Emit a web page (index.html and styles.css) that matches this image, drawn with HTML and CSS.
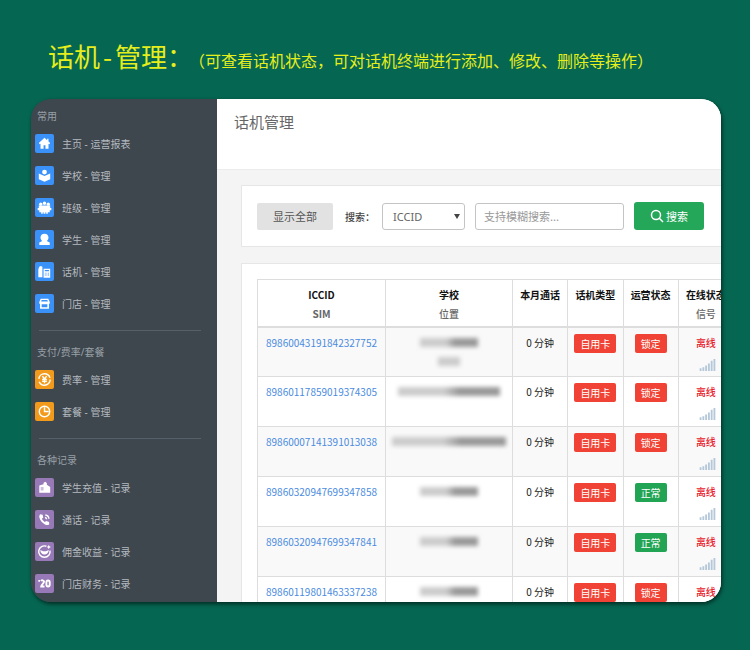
FILE: index.html
```
<!DOCTYPE html>
<html lang="zh-CN">
<head>
  <meta charset="UTF-8">
  <meta name="viewport" content="width=device-width, initial-scale=1.0">
  <title>话机管理</title>
  <link rel="stylesheet" href="styles.css">
</head>
<body>
  <svg class="defs" width="0" height="0" aria-hidden="true">
    <symbol id="signal" viewBox="0 0 17 13">
      <path d="M0 10h2v3H0zM3 9h2v4H3zM6 7h2v6H6zM9 5h2v8H9zM12 2h2v11h-2zM15 0h2v13h-2z"/>
    </symbol>
  </svg>

  <header class="banner">
    <h1>话机<span>-</span>管理：</h1>
    <p>（可查看话机状态，可对话机终端进行添加、修改、删除等操作）</p>
  </header>

  <div class="window">
    <nav class="sidebar">
      <h3>常用</h3>
      <ul class="blue">
        <li><a href="#"><svg viewBox="0 0 20 20"><path d="M10 4 4 9.600l1 1.200.8-.6v5.300H9v-3.600h2v3.600h3.200v-5.300l.8.600 1-1.200-1.800-1.700V5h-1.400v1.600z"/></svg>主页 - 运营报表</a></li>
        <li><a href="#"><svg viewBox="0 0 20 20"><circle cx="10" cy="6.400" r="2.500"/><path d="M4 7.800 10 10.600l6-2.800v6.200L10 16.600 4 14z"/></svg>学校 - 管理</a></li>
        <li><a href="#"><svg viewBox="0 0 20 20"><circle cx="6" cy="6.500" r="1.700"/><circle cx="10" cy="5.500" r="1.800"/><circle cx="14" cy="6.500" r="1.700"/><path d="M4 8h12v2.500h1.200V13h-1.700v2h-2v1.500h-1.700V15h-.8v1.500H9V15h-.8v1.500H6.500V15h-2v-2H2.800v-2.500H4z"/></svg>班级 - 管理</a></li>
        <li><a href="#"><svg viewBox="0 0 20 20"><path d="M10 4c2.600 0 4.200 1.700 4.200 4 0 1.500-.7 2.800-1.800 3.600l3.100 1.600v2.500h-11v-2.500l3.100-1.600C6.500 10.800 5.800 9.500 5.800 8c0-2.300 1.600-4 4.200-4z"/></svg>学生 - 管理</a></li>
        <li><a href="#"><svg viewBox="0 0 20 20"><path fill-rule="evenodd" d="M4.500 5 6 4.200 7.800 5v11H3.500V7.500zM9 7h7v9.500H9zm1.300 1.300v1.500h4.400V8.300zm0 2.900v.9h1v-.9zm1.700 0v.9h1v-.9zm1.700 0v.9h1v-.9zm-3.400 2v.9h1v-.9zm1.700 0v.9h1v-.9zm1.700 0v.9h1v-.9z"/></svg>话机 - 管理</a></li>
        <li><a href="#"><svg viewBox="0 0 20 20"><path fill-rule="evenodd" d="M6 5h8l1.500 3.500v1.800h-.8v5.200H5.300v-5.200h-.8V8.500zm1 1.200L6.400 8h7.200L13 6.200zm0 4.600V14h6v-3.200z"/></svg>门店 - 管理</a></li>
      </ul>
      <hr>
      <h3>支付/费率/套餐</h3>
      <ul class="orange">
        <li><a href="#"><svg viewBox="0 0 20 20"><circle class="ring" cx="10" cy="10" r="6" stroke-dasharray="16 3"/><path class="ring" d="m7.800 6.500 2.200 3 2.200-3M7.500 10h5M7.500 12h5M10 9.500V14"/></svg>费率 - 管理</a></li>
        <li><a href="#"><svg viewBox="0 0 20 20"><circle class="ring" cx="10" cy="10" r="5.500"/><path class="ring" d="M10 5.500V10h4.500"/></svg>套餐 - 管理</a></li>
      </ul>
      <hr>
      <h3>各种记录</h3>
      <ul class="purple">
        <li><a href="#"><svg viewBox="0 0 20 20"><path fill-rule="evenodd" d="M4.500 8 9 6.500V5l2-1 1.500 1.500V7L16 9.500v6H4.500zm1.500 2v1h3v-1zm0 2v1h3v-1z"/></svg>学生充值 - 记录</a></li>
        <li><a href="#"><svg viewBox="0 0 20 20"><path d="M5.500 4.500 8 5l.7 3-1.400 1.300c.6 1.500 1.600 2.600 3 3.400l1.500-1.200 3 1 .2 2.400c-1.200 1.200-2.700 1.200-4.500.3-3-1.500-5.200-4.200-5.900-7.200-.3-1.400 0-2.700.9-3.500z"/><path class="ring" d="M10.500 7.800c1 .2 1.600.9 1.700 2M10.800 5.300c2.300.2 3.700 1.700 3.800 4"/></svg>通话 - 记录</a></li>
        <li><a href="#"><svg viewBox="0 0 20 20"><path class="ring" d="M12 4.500A6 6 0 1 0 15.800 9"/><path d="m5.500 8.500 3 1.300h3l3-1.300c-.3 3-2 4.700-4.500 4.700s-4.200-1.700-4.500-4.700zM14.500 3l.7 1.600 1.600.7-1.600.7-.7 1.600-.7-1.600-1.600-.7 1.600-.7z"/></svg>佣金收益 - 记录</a></li>
        <li><a href="#"><svg viewBox="0 0 20 20"><path class="bold" d="M3.500 7.200h1.800M6.500 7.500c.5-1.200 3-1.200 3 .6 0 1.700-3 2.900-3 5h3.500"/><rect class="bold" x="12" y="6.800" width="3.500" height="6.300" rx="1.700"/></svg>门店财务 - 记录</a></li>
      </ul>
    </nav>

    <main>
      <div class="page-title"><h2>话机管理</h2></div>
      <div class="content">
        <form class="panel filter">
          <button type="button" class="btn-all">显示全部</button>
          <label for="field">搜索：</label>
          <div class="select">
            <select id="field"><option>ICCID</option></select>
          </div>
          <input type="text" aria-label="搜索内容" placeholder="支持模糊搜索...">
          <button type="submit" class="btn-search"><svg viewBox="0 0 14 14"><circle cx="6" cy="6" r="4.500"/><path d="m9.300 9.300 3.700 3.700"/></svg>搜索</button>
        </form>

        <div class="panel list">
          <table>
            <colgroup>
              <col class="col-id"><col class="col-school"><col><col><col><col>
            </colgroup>
            <thead>
              <tr>
                <th>ICCID<span class="sim">SIM</span></th>
                <th>学校<span>位置</span></th>
                <th>本月通话</th>
                <th>话机类型</th>
                <th>运营状态</th>
                <th>在线状态<span>信号</span></th>
              </tr>
            </thead>
            <tbody>
              <tr>
                <td><a href="#">89860043191842327752</a></td>
                <td><i class="mask"></i><i class="mask short"></i></td>
                <td>0 分钟</td>
                <td><span class="tag red">自用卡</span></td>
                <td><span class="tag red">锁定</span></td>
                <td class="offline">离线<svg class="signal"><use href="#signal"/></svg></td>
              </tr>
              <tr>
                <td><a href="#">89860117859019374305</a></td>
                <td><i class="mask long"></i></td>
                <td>0 分钟</td>
                <td><span class="tag red">自用卡</span></td>
                <td><span class="tag red">锁定</span></td>
                <td class="offline">离线<svg class="signal"><use href="#signal"/></svg></td>
              </tr>
              <tr>
                <td><a href="#">89860007141391013038</a></td>
                <td><i class="mask full"></i></td>
                <td>0 分钟</td>
                <td><span class="tag red">自用卡</span></td>
                <td><span class="tag red">锁定</span></td>
                <td class="offline">离线<svg class="signal"><use href="#signal"/></svg></td>
              </tr>
              <tr>
                <td><a href="#">89860320947699347858</a></td>
                <td><i class="mask"></i></td>
                <td>0 分钟</td>
                <td><span class="tag red">自用卡</span></td>
                <td><span class="tag green">正常</span></td>
                <td class="offline">离线<svg class="signal"><use href="#signal"/></svg></td>
              </tr>
              <tr>
                <td><a href="#">89860320947699347841</a></td>
                <td><i class="mask"></i></td>
                <td>0 分钟</td>
                <td><span class="tag red">自用卡</span></td>
                <td><span class="tag green">正常</span></td>
                <td class="offline">离线<svg class="signal"><use href="#signal"/></svg></td>
              </tr>
              <tr>
                <td><a href="#">89860119801463337238</a></td>
                <td><i class="mask"></i></td>
                <td>0 分钟</td>
                <td><span class="tag red">自用卡</span></td>
                <td><span class="tag red">锁定</span></td>
                <td class="offline">离线<svg class="signal"><use href="#signal"/></svg></td>
              </tr>
            </tbody>
          </table>
        </div>
      </div>
    </main>
  </div>
</body>
</html>
```
FILE: styles.css
```
* {
  box-sizing: border-box;
}
body {
  display: flex;
  flex-direction: column;
  height: 100vh;
  margin: 0;
  padding: 0 29px 48px 31px;
  background-color: #056752;
  font-family: "Noto Sans CJK SC", sans-serif;
  font-size: 10px;
  overflow: hidden;
}
h1, h2, h3, p, ul {
  margin: 0;
  padding: 0;
  font-weight: normal;
}
a {
  text-decoration: none;
}
button, input, select {
  font-family: inherit;
  font-size: 11px;
}
.defs {
  position: absolute;
}

/* banner */
.banner {
  display: flex;
  align-items: baseline;
  flex: none;
  height: 99px;
  padding: 36px 0 0 17px;
  color: #e6ee1c;
  white-space: nowrap;
}
.banner h1 {
  font-size: 26px;
  line-height: 40px;
}
.banner h1 span {
  margin: 0 3px;
}
.banner p {
  margin-left: -4px;
  font-size: 16px;
}

/* window */
.window {
  display: flex;
  flex: 1;
  min-height: 0;
  border-radius: 20px;
  overflow: hidden;
  box-shadow: 1px 2px 4px rgba(0, 0, 0, 0.6);
}

/* sidebar */
.sidebar {
  flex: none;
  width: 186px;
  padding: 6px 16px 0 4px;
  background-color: #3e464e;
  font-family: "Noto Sans", "Noto Sans CJK SC", sans-serif;
}
.sidebar h3 {
  padding-left: 2px;
  color: #98a0a6;
  font-size: 10px;
  line-height: 22px;
}
.sidebar ul {
  list-style: none;
}
.sidebar a {
  display: flex;
  align-items: center;
  gap: 8px;
  height: 32px;
  color: #b4babf;
}
.sidebar hr {
  margin: 11px 0 10px 4px;
  border: 0;
  border-top: 1px solid #566068;
}
.sidebar svg {
  width: 19px;
  height: 19px;
  border-radius: 2px;
  fill: #fff;
}
.blue svg {
  background-color: #3a92f8;
}
.orange svg {
  background-color: #f29a1c;
}
.purple svg {
  background-color: #9679b6;
}
.sidebar .ring {
  fill: none;
  stroke: #fff;
  stroke-width: 1.5;
}
.sidebar .bold {
  fill: none;
  stroke: #fff;
  stroke-width: 2;
}

/* main */
main {
  flex: 1;
  min-width: 0;
  overflow: hidden;
  background-color: #f4f4f4;
}
.page-title {
  height: 71px;
  padding: 11px 17px;
  border-bottom: 1px solid #ececec;
  background-color: #fff;
}
.page-title h2 {
  color: #666;
  font-size: 15px;
  line-height: 24px;
}
.content {
  padding: 15px 0 0 24px;
}
.panel {
  border: 1px solid #e6e6e6;
  border-right: 0;
  background-color: #fff;
}
.filter {
  display: flex;
  align-items: center;
  height: 62px;
  margin-bottom: 16px;
  padding: 0 17px 0 15px;
}
.filter label {
  margin: 0 7px 0 12px;
  color: #444;
  font-weight: 500;
  white-space: nowrap;
}
.btn-all {
  width: 76px;
  height: 27px;
  padding: 0;
  border: 0;
  border-radius: 2px;
  background-color: #e2e2e2;
  color: #555;
}
.select {
  position: relative;
  width: 83px;
  margin-right: 10px;
}
.select::after {
  content: "";
  position: absolute;
  top: 11px;
  right: 5px;
  border: 3px solid transparent;
  border-top: 5px solid #444;
  border-bottom: 0;
}
.filter select {
  display: block;
  width: 100%;
  height: 27px;
  padding: 0 10px;
  border: 1px solid #c4c4c4;
  border-radius: 3px;
  background-color: #fff;
  color: #666;
  font-family: "Noto Sans", "Noto Sans CJK SC", sans-serif;
  appearance: none;
}
.filter input {
  flex: 1;
  min-width: 0;
  height: 27px;
  margin-right: 10px;
  padding: 0 8px;
  border: 1px solid #c4c4c4;
  border-radius: 3px;
}
.filter input::placeholder {
  color: #999;
}
.btn-search {
  display: flex;
  align-items: center;
  justify-content: center;
  gap: 2px;
  width: 70px;
  height: 28px;
  padding: 0;
  border: 0;
  border-radius: 3px;
  background-color: #25a75a;
  color: #fff;
}
.btn-search svg {
  width: 14px;
  height: 14px;
  fill: none;
  stroke: #fff;
  stroke-width: 1.5;
}

/* table */
.list {
  padding: 15px;
}
table {
  width: 477px;
  table-layout: fixed;
  border-collapse: collapse;
}
.col-id {
  width: 128px;
}
.col-school {
  width: 127px;
}
th, td {
  padding: 5px 0 0;
  border: 1px solid #ddd;
  line-height: 19px;
  text-align: center;
  vertical-align: top;
  white-space: nowrap;
}
th {
  height: 47px;
  border-bottom-width: 2px;
  color: #111;
  font-weight: bold;
}
th span {
  display: block;
  color: #666;
  font-weight: 500;
}
th .sim {
  font-weight: bold;
}
td {
  height: 50px;
  color: #222;
}
tbody tr:nth-child(odd) {
  background-color: #f9f9f9;
}
td a {
  color: #4a8be0;
}
.tag {
  display: inline-block;
  margin-top: 1px;
  padding: 0 6px;
  border-radius: 2px;
  color: #fff;
  line-height: 19px;
}
.red {
  background-color: #f14335;
}
.green {
  background-color: #22a455;
}
.offline {
  color: #e8202a;
  font-weight: 500;
}
.signal {
  display: block;
  width: 17px;
  height: 12px;
  margin: 7px 0 0 20px;
  fill: #b4c8da;
}

/* masked school names */
.mask {
  display: block;
  width: 58px;
  height: 9px;
  margin: 5px auto 10px;
  background: linear-gradient(to right, #ccc 45%, #999 60%);
  filter: blur(2px);
}
.mask.short {
  width: 22px;
  background: #ccc;
}
.mask.long {
  width: 102px;
}
.mask.full {
  width: 114px;
}
```
